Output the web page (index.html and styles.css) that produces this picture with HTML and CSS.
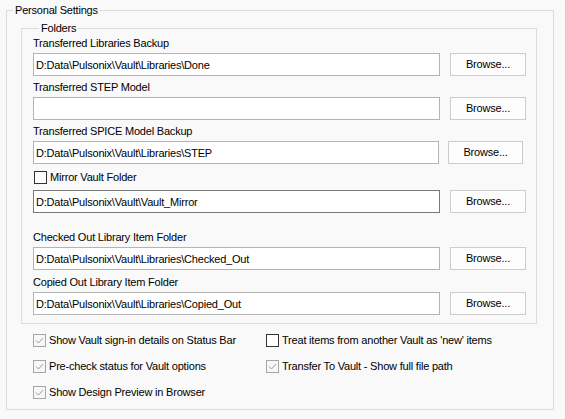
FILE: index.html
```html
<!DOCTYPE html>
<html>
<head>
<meta charset="utf-8">
<link rel="stylesheet" href="styles.css">
</head>
<body>
<fieldset class="group outer">
  <legend class="title">Personal Settings</legend>
  <fieldset class="group folders">
    <legend class="title">Folders</legend>

    <div class="row r1">
      <div class="label">Transferred Libraries Backup</div>
      <div class="line">
        <input class="field" type="text" value="D:Data\Pulsonix\Vault\Libraries\Done">
        <button class="btn">Browse...</button>
      </div>
    </div>

    <div class="row r2">
      <div class="label">Transferred STEP Model</div>
      <div class="line">
        <input class="field" type="text" value="">
        <button class="btn">Browse...</button>
      </div>
    </div>

    <div class="row r3">
      <div class="label">Transferred SPICE Model Backup</div>
      <div class="line shift">
        <input class="field" type="text" value="D:Data\Pulsonix\Vault\Libraries\STEP">
        <button class="btn">Browse...</button>
      </div>
    </div>

    <div class="row r4">
      <div class="label check-label"><span class="cb"></span>Mirror Vault Folder</div>
      <div class="line">
        <input class="field active" type="text" value="D:Data\Pulsonix\Vault\Vault_Mirror">
        <button class="btn">Browse...</button>
      </div>
    </div>

    <div class="row r5">
      <div class="label">Checked Out Library Item Folder</div>
      <div class="line">
        <input class="field" type="text" value="D:Data\Pulsonix\Vault\Libraries\Checked_Out">
        <button class="btn">Browse...</button>
      </div>
    </div>

    <div class="row r6">
      <div class="label">Copied Out Library Item Folder</div>
      <div class="line">
        <input class="field" type="text" value="D:Data\Pulsonix\Vault\Libraries\Copied_Out">
        <button class="btn">Browse...</button>
      </div>
    </div>
  </fieldset>

  <div class="options">
    <div class="opt"><span class="cb checked"><svg viewBox="0 0 11 11" width="11" height="11"><polyline points="2,5.5 4.5,8 9,3" /></svg></span>Show Vault sign-in details on Status Bar</div>
    <div class="opt"><span class="cb"></span>Treat items from another Vault as 'new' items</div>
    <div class="opt"><span class="cb checked"><svg viewBox="0 0 11 11" width="11" height="11"><polyline points="2,5.5 4.5,8 9,3" /></svg></span>Pre-check status for Vault options</div>
    <div class="opt"><span class="cb checked"><svg viewBox="0 0 11 11" width="11" height="11"><polyline points="2,5.5 4.5,8 9,3" /></svg></span>Transfer To Vault - Show full file path</div>
    <div class="opt"><span class="cb checked"><svg viewBox="0 0 11 11" width="11" height="11"><polyline points="2,5.5 4.5,8 9,3" /></svg></span>Show Design Preview in Browser</div>
  </div>
</fieldset>
</body>
</html>
```

FILE: styles.css
```css
html, body {
  margin: 0;
  padding: 0;
  background: #f9f9f9;
}

body {
  width: 565px;
  height: 419px;
  overflow: hidden;
  font-family: "Liberation Sans", Arial, sans-serif;
  font-size: 11px;
  line-height: 13px;
  letter-spacing: -0.2px;
  color: #000;
}

.group {
  border: 1px solid #dcdcdc;
  padding: 0;
  min-inline-size: 0;
  box-sizing: border-box;
}

.title {
  padding: 0 2px;
  margin-left: 6px;
  line-height: 13px;
  height: 13px;
}

.outer {
  margin: 4px 0 0 6px;
  width: 548px;
  padding: 0 0 4px 0;
}

.folders {
  margin: 5px 0 0 14px;
  width: 516px;
  padding: 0 0 8px 11px;
}

.row .label {
  height: 13px;
  line-height: 13px;
  white-space: nowrap;
}

.r1 { margin-top: 2px; }
.r2 { margin-top: 5px; }
.r3 { margin-top: 5px; }
.r4 { margin-top: 7px; }
.r5 { margin-top: 18px; }
.r6 { margin-top: 6px; }

.line {
  display: flex;
  align-items: flex-start;
  margin-top: 3px;
}

.r4 .line { margin-top: 6px; }

.field {
  box-sizing: border-box;
  width: 407px;
  height: 23px;
  margin: 0;
  padding: 0 2px;
  border: 1px solid #b4b4b4;
  background: #fff;
  color: #000;
  font: inherit;
  letter-spacing: inherit;
  outline: none;
}

.field.active {
  border-color: #7a7a7a;
}

.btn {
  box-sizing: border-box;
  width: 76px;
  height: 23px;
  margin: 0 0 0 10px;
  padding: 0;
  border: 1px solid #cccccc;
  background: #fdfdfd;
  color: #000;
  font: inherit;
  letter-spacing: inherit;
}

.shift .field { width: 406px; }
.shift .btn { margin-left: 9px; width: 75px; }

.check-label {
  display: flex;
  align-items: center;
  margin-left: 1px;
}

.cb {
  box-sizing: border-box;
  width: 13px;
  height: 13px;
  border: 1px solid #333333;
  background: #ffffff;
  margin-right: 3px;
  flex: none;
  display: inline-flex;
}

.cb.checked {
  border-color: #a6a6a6;
  background: #f7f7f7;
}

.cb svg {
  display: block;
}

.cb svg polyline {
  fill: none;
  stroke: #9a9a9a;
  stroke-width: 1;
}

.options {
  display: grid;
  grid-template-columns: 233px auto;
  grid-auto-rows: 26px;
  margin: 3px 0 0 26px;
}

.opt {
  display: flex;
  align-items: center;
  white-space: nowrap;
}
```
